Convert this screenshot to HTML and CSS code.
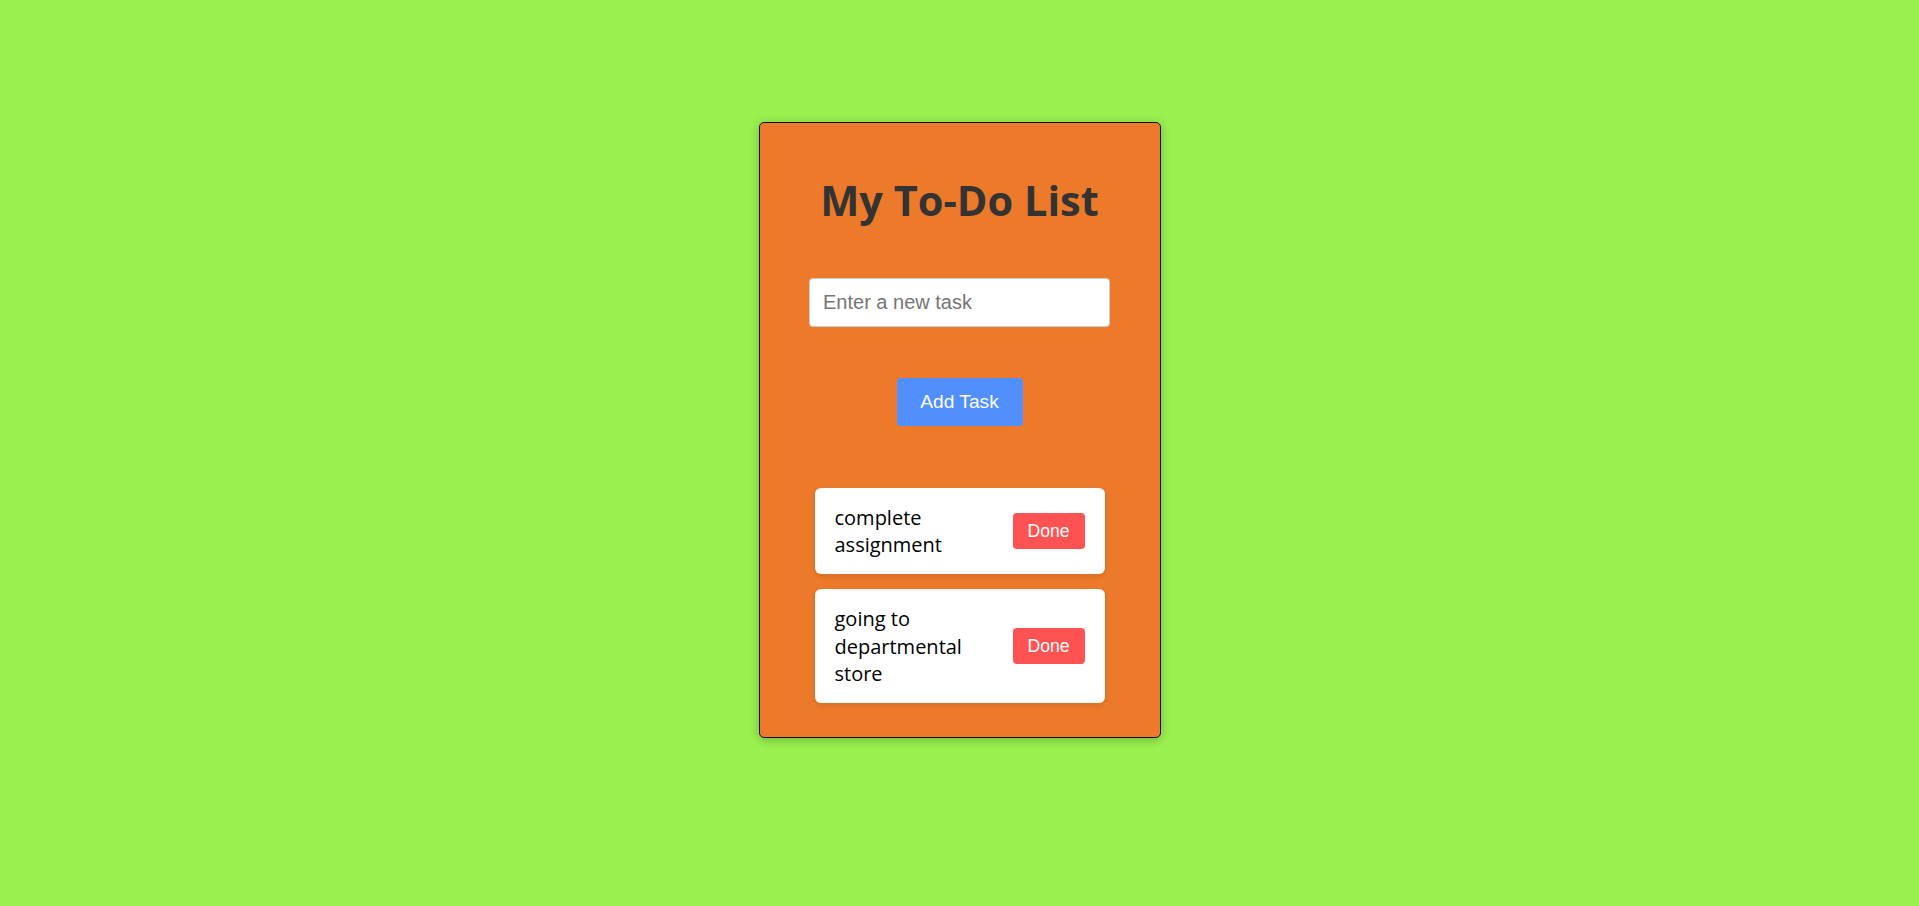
FILE: index.html
```html
<!DOCTYPE html>
<html lang="en">
<head>
<meta charset="utf-8">
<title>My To-Do List</title>
<link rel="stylesheet" href="styles.css">
</head>
<body>
<div class="card">
  <h1 class="title">My To-Do List</h1>
  <input class="task-input" type="text" placeholder="Enter a new task">
  <button class="add-btn">Add Task</button>
  <ul class="task-list">
    <li class="task">
      <span class="task-text">complete assignment</span>
      <button class="done-btn">Done</button>
    </li>
    <li class="task">
      <span class="task-text">going to departmental store</span>
      <button class="done-btn">Done</button>
    </li>
  </ul>
</div>
</body>
</html>
```
FILE: styles.css
```css
html, body {
  margin: 0;
  padding: 0;
}
body {
  background: #9af04f;
  min-height: 906px;
  display: flex;
  justify-content: center;
  align-items: flex-start;
  padding-top: 122px;
  box-sizing: border-box;
  font-family: "Open Sans", sans-serif;
}
.card {
  width: 402px;
  box-sizing: border-box;
  background: #ec7a2a;
  border: 1px solid #111;
  border-radius: 5px;
  box-shadow: 0 2px 10px rgba(0, 0, 0, 0.25);
  padding: 50px 0 34px;
  display: flex;
  flex-direction: column;
  align-items: center;
}
.title {
  margin: 0;
  font-family: "Open Sans", sans-serif;
  font-weight: 700;
  font-size: 41.5px;
  line-height: 54px;
  color: #333;
}
.task-input {
  margin-top: 51px;
  width: 301px;
  height: 49px;
  box-sizing: border-box;
  border: 1px solid #ccc;
  border-radius: 4px;
  padding: 0 13px;
  font-family: "Liberation Sans", Arial, sans-serif;
  font-size: 20px;
  color: #333;
  background: #fff;
  outline: none;
}
.task-input::placeholder {
  color: #757575;
}
.add-btn {
  margin-top: 51px;
  width: 126px;
  height: 48px;
  border: none;
  border-radius: 4px;
  background: #528ffe;
  color: #fff;
  font-family: "Liberation Sans", Arial, sans-serif;
  font-size: 19.2px;
  padding: 0;
  cursor: pointer;
}
.task-list {
  list-style: none;
  margin: 62px 0 0;
  padding: 0;
  display: flex;
  flex-direction: column;
  gap: 15px;
}
.task {
  width: 290px;
  box-sizing: border-box;
  background: #fff;
  border-radius: 6px;
  box-shadow: 0 2px 6px rgba(0, 0, 0, 0.1);
  padding: 16px 20px;
  display: flex;
  align-items: center;
  justify-content: space-between;
}
.task-text {
  flex: 1;
  margin-right: 20px;
  font-family: "Open Sans", sans-serif;
  font-size: 20px;
  line-height: 27.2px;
  color: #000;
}
.done-btn {
  width: 72px;
  height: 36px;
  flex-shrink: 0;
  border: none;
  border-radius: 4px;
  background: #ff5252;
  color: #fff;
  font-family: "Liberation Sans", Arial, sans-serif;
  font-size: 17.6px;
  padding: 0;
  cursor: pointer;
}
```
